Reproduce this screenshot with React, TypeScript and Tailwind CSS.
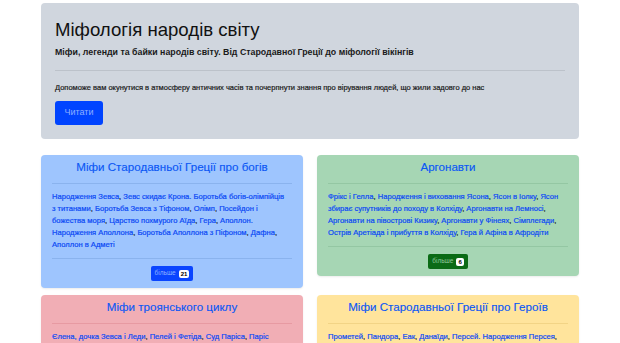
import React from "react";

type Card = {
  title: string;
  items: string[];
  bg: string;
  line: string;
  count?: string;
  btn?: string;
  btnText?: string;
};

const cards: Card[] = [
  {
    title: "Міфи Стародавньої Греції про богів",
    items: [
      "Народження Зевса",
      "Зевс скидає Крона. Боротьба богів-олімпійців з\u00a0титанами",
      "Боротьба Зевса з Тіфоном",
      "Олімп",
      "Посейдон і божества\u00a0моря",
      "Царство похмурого Аїда",
      "Гера",
      "Аполлон. Народження Аполлона",
      "Боротьба Аполлона з Піфоном",
      "Дафна",
      "Аполлон в Адметі",
    ],
    bg: "bg-[#9ec5fe]",
    line: "bg-[#8ab3ee]",
    count: "21",
    btn: "bg-[#0a45ff]",
    btnText: "text-[#8fb2ff]",
  },
  {
    title: "Аргонавти",
    items: [
      "Фрікс і Гелла",
      "Народження і виховання Ясона",
      "Ясон в Іолку",
      "Ясон збирає супутників до походу в Колхіду",
      "Аргонавти на Лемносі",
      "Аргонавти на півострові Кизику",
      "Аргонавти у Фінеях",
      "Сімплегади",
      "Острів Аретіада і прибуття в Колхіду",
      "Гера й Афіна в Афродіти",
    ],
    bg: "bg-[#a6d6b4]",
    line: "bg-[#94c7a3]",
    count: "6",
    btn: "bg-[#0b6b16]",
    btnText: "text-[#8fc79b]",
  },
  {
    title: "Міфи троянського циклу",
    items: [
      "Єлена, дочка Зевса і Леди",
      "Пелей і Фетіда",
      "Суд Паріса",
      "Паріс викрадає Єлену",
      "Збори греків у похід",
      "Ахілл на Скіросі",
    ],
    bg: "bg-[#f1aeb5]",
    line: "bg-[#e79aa2]",
  },
  {
    title: "Міфи Стародавньої Греції про Героїв",
    items: [
      "Прометей",
      "Пандора",
      "Еак",
      "Данаїди",
      "Персей. Народження Персея",
      "Персей вбиває Горгону Медузу",
    ],
    bg: "bg-[#ffe49c]",
    line: "bg-[#f2d486]",
  },
];

function CardView({ c }: { c: Card }) {
  return (
    <div className={`${c.bg} rounded-[4px] px-[11px] pt-[5px] pb-[7px] shadow-[0_1px_2px_rgba(0,0,0,0.08)]`}>
      <div className="text-center text-[11.6px] leading-[14px] text-[#0b57f5] [-webkit-text-stroke:0.15px_currentColor]">{c.title}</div>
      <div className={`h-px ${c.line} mt-[9px]`} />
      <div className="mt-[7px] text-[7.6px] leading-[12px] text-[#212529] [-webkit-text-stroke:0.2px_currentColor]">
        {c.items.map((it, i) => (
          <React.Fragment key={i}>
            <span className="text-[#0a48f5]">{it}</span>
            {i < c.items.length - 1 ? ", " : ""}
          </React.Fragment>
        ))}
      </div>
      {c.count && (
        <>
          <div className={`h-px ${c.line} mt-[7px]`} />
          <div className="flex justify-center mt-[7px]">
            <div className={`${c.btn} h-[15px] rounded-[2px] px-[4px] flex items-center gap-[3px]`}>
              <span className={`text-[6.5px] leading-none ${c.btnText}`}>більше</span>
              <span className="bg-white text-black text-[6px] font-bold leading-none px-[2px] py-[1px] rounded-[2px]">
                {c.count}
              </span>
            </div>
          </div>
        </>
      )}
    </div>
  );
}

export default function App() {
  return (
    <div className="bg-white min-h-[343px] overflow-hidden" style={{ fontFamily: '"Liberation Sans", Arial, sans-serif' }}>
      <div className="w-[538px] mx-auto pt-[3px]">
        <div className="bg-[#d0d6de] rounded-[4px] px-[14px] pt-[14px] pb-[14px]">
          <h1 className="text-[18.6px] leading-[26px] text-[#111]">Міфологія народів світу</h1>
          <p className="text-[8.8px] leading-[12px] font-bold text-[#1a1a1a] mt-[3px]">
            Міфи, легенди та байки народів світу. Від Стародавної Греції до міфології вікінгів
          </p>
          <div className="h-px bg-[#bcc2ca] mt-[12px]" />
          <p className="text-[7.5px] leading-[10px] text-[#1a1a1a] mt-[12px] [-webkit-text-stroke:0.2px_currentColor]">
            Допоможе вам окунутися в атмосферу античних часів та почерпнути знання про вірування людей, що жили задовго до нас
          </p>
          <button className="mt-[8px] bg-[#0044ff] text-[#8fb0ff] text-[9px] h-[24px] w-[48px] rounded-[3px]">Читати</button>
        </div>
        <div className="grid grid-cols-2 gap-x-[14px] gap-y-[7px] mt-[16px] items-start">
          {cards.map((c, i) => (
            <CardView key={i} c={c} />
          ))}
        </div>
      </div>
    </div>
  );
}
